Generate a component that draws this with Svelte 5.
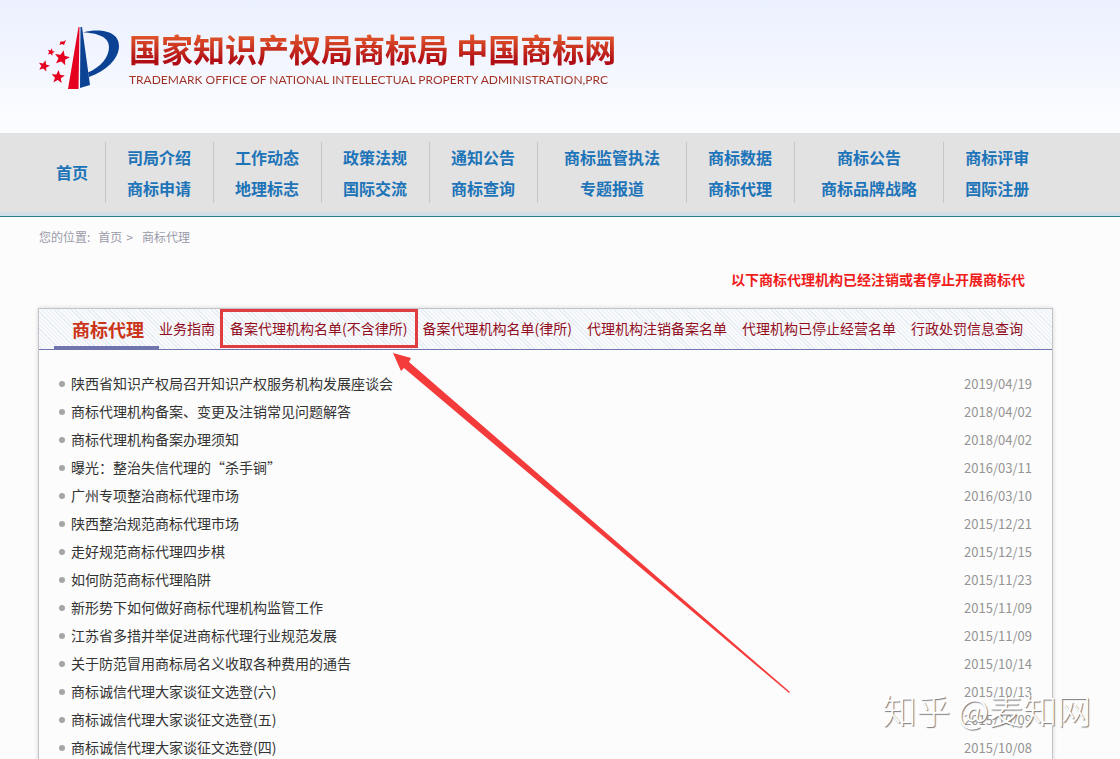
<script>
    const menu = [
        { links: ['司局介绍', '商标申请'] },
        { links: ['工作动态', '地理标志'] },
        { links: ['政策法规', '国际交流'] },
        { links: ['通知公告', '商标查询'] },
        { links: ['商标监管执法', '专题报道'], wide: true },
        { links: ['商标数据', '商标代理'] },
        { links: ['商标公告', '商标品牌战略'], wide: true },
        { links: ['商标评审', '国际注册'] }
    ];

    const tabs = [
        { name: '业务指南' },
        { name: '备案代理机构名单(不含律所)', marked: true },
        { name: '备案代理机构名单(律所)' },
        { name: '代理机构注销备案名单' },
        { name: '代理机构已停止经营名单' },
        { name: '行政处罚信息查询' }
    ];

    const articles = [
        { title: '陕西省知识产权局召开知识产权服务机构发展座谈会', date: '2019/04/19' },
        { title: '商标代理机构备案、变更及注销常见问题解答', date: '2018/04/02' },
        { title: '商标代理机构备案办理须知', date: '2018/04/02' },
        { title: '曝光：整治失信代理的“杀手锏”', date: '2016/03/11' },
        { title: '广州专项整治商标代理市场', date: '2016/03/10' },
        { title: '陕西整治规范商标代理市场', date: '2015/12/21' },
        { title: '走好规范商标代理四步棋', date: '2015/12/15' },
        { title: '如何防范商标代理陷阱', date: '2015/11/23' },
        { title: '新形势下如何做好商标代理机构监管工作', date: '2015/11/09' },
        { title: '江苏省多措并举促进商标代理行业规范发展', date: '2015/11/09' },
        { title: '关于防范冒用商标局名义收取各种费用的通告', date: '2015/10/14' },
        { title: '商标诚信代理大家谈征文选登(六)', date: '2015/10/13' },
        { title: '商标诚信代理大家谈征文选登(五)', date: '2015/10/09' },
        { title: '商标诚信代理大家谈征文选登(四)', date: '2015/10/08' }
    ];

    // x, y, radius, rotation
    const stars = [
        [24, 32, 8, 12],
        [20, 51, 7, 5],
        [6, 40, 6, 15],
        [13, 26, 4, 15]
    ];
</script>

<div class="page">
    <header class="banner">
        <svg class="logo" viewBox="0 0 82 64" aria-hidden="true">
            <path fill="#e50020" d="M40.5 1 L41.5 1 L40.5 63 L30 63 Z" />
            <path fill="#0b4294" d="M42.5 1 L44 1 L52 59 L42 62 Z" />
            <path fill="#0b4294" d="M45 6.5 C62 2 81 5 81 20 C81 33 68 45 51 51 L50 46.5 C63 41 71 31 71 21 C71 11 60 7 45 6.5 Z" />
            {#each stars as [x, y, r, turn]}
                <polygon
                    fill="#e50020"
                    points="0,-1 .26,-.35 .95,-.31 .42,.13 .59,.81 0,.44 -.59,.81 -.42,.13 -.95,-.31 -.26,-.35"
                    transform="translate({x} {y}) rotate({turn}) scale({r})"
                />
            {/each}
            <path fill="#e50020" d="M28 14 L27 16.5 L26 19 L24 18 L21.5 19 L22.5 15.5 L25.5 15.5 Z" />
        </svg>
        <div class="names">
            <h1>国家知识产权局商标局 中国商标网</h1>
            <p>TRADEMARK OFFICE OF NATIONAL INTELLECTUAL PROPERTY ADMINISTRATION,PRC</p>
        </div>
    </header>

    <nav class="menu">
        <div class="group home"><a href="#home">首页</a></div>
        {#each menu as group}
            <div class="group" class:wide={group.wide}>
                {#each group.links as link}
                    <a href="#menu">{link}</a>
                {/each}
            </div>
        {/each}
    </nav>

    <main>
        <div class="crumbs">
            <span>您的位置:</span>
            <a href="#home">首页</a>
            <span class="sep">&gt;</span>
            <a href="#agency">商标代理</a>
        </div>

        <div class="notice">以下商标代理机构已经注销或者停止开展商标代</div>

        <section class="panel">
            <div class="tabs">
                <h2>商标代理</h2>
                {#each tabs as tab}
                    <a href="#tab" class:marked={tab.marked}>{tab.name}</a>
                {/each}
            </div>
            <ul>
                {#each articles as article}
                    <li>
                        <a href="#article">{article.title}</a>
                        <time>{article.date}</time>
                    </li>
                {/each}
            </ul>
        </section>
    </main>

    <svg class="arrow" viewBox="0 0 398 341" aria-hidden="true">
        <path fill="#f43b3b" d="M0 0 L18 5 L16 9 L397 339 L396 340 L11 15 L8 18 Z" />
    </svg>
    <div class="watermark">知乎 @麦知网</div>
</div>

<style>
    :global(body) {
        margin: 0;
        background: #fcfcfc;
    }

    .page {
        position: relative;
        height: 100vh;
        overflow: hidden;
        font-family: "Noto Sans CJK SC", sans-serif;
        font-size: 14px;
    }

    a {
        color: inherit;
        text-decoration: none;
    }

    .banner {
        display: flex;
        align-items: flex-start;
        gap: 9px;
        box-sizing: border-box;
        height: 133px;
        padding: 26px 38px 0;
        background: linear-gradient(#ebf0fe, #fcfdff);
    }

    .logo {
        flex: none;
        width: 82px;
        height: 64px;
    }

    .names {
        white-space: nowrap;
    }

    h1,
    .names p {
        margin: 0;
        color: transparent;
        background: linear-gradient(#e2582c 20%, #b00d14 80%);
        -webkit-background-clip: text;
        background-clip: text;
    }

    h1 {
        font-size: 32px;
        line-height: 44px;
        font-weight: 700;
    }

    .names p {
        font-family: Lato, sans-serif;
        font-size: 12px;
        line-height: 20px;
        background-image: linear-gradient(#c4402c, #7c2018);
    }

    .menu {
        display: flex;
        box-sizing: border-box;
        height: 84px;
        padding: 9px 38px 13px;
        background: linear-gradient(#e2e2e2 95%, #d3dfe8 95%);
        border-bottom: 1px solid #2b7c8d;
        color: #1d74b8;
        font-size: 16px;
        font-weight: 700;
        line-height: 31px;
        white-space: nowrap;
    }

    .group {
        display: flex;
        flex-direction: column;
        align-items: center;
        justify-content: center;
        padding: 0 22px 0 21px;
        border-right: 1px solid #c6c6ca;
    }

    .group.wide {
        padding: 0 26px;
    }

    .group.home {
        padding: 0 17px 0 18px;
    }

    .group:last-child {
        border-right: 0;
    }

    main {
        margin: 0 67px 0 38px;
    }

    .crumbs {
        display: flex;
        gap: 8px;
        padding: 10px 0 0 1px;
        color: #9a9aa8;
        font-size: 12px;
        line-height: 20px;
    }

    .crumbs .sep {
        margin: 0 1px 0 -4px;
    }

    .notice {
        padding: 22px 28px 19px 0;
        color: #f01c1c;
        font-weight: 700;
        line-height: 20px;
        text-align: right;
    }

    .panel {
        border: 1px solid #c4c4c8;
        box-shadow: 0 0 4px #d4d4d4;
    }

    .tabs {
        display: flex;
        gap: 15px;
        height: 40px;
        padding-left: 15px;
        background: repeating-linear-gradient(45deg, #f8fafc 0 2px, #e8edf5 2px 3px);
        border-bottom: 1px solid #7175ad;
        color: #930d1c;
        line-height: 38px;
        white-space: nowrap;
    }

    h2 {
        box-sizing: border-box;
        margin: 0 -15px 0 0;
        padding: 0 15px 0 18px;
        border-bottom: 3px solid #7175ad;
        color: #cb3418;
        font-size: 18px;
        line-height: 40px;
    }

    .marked {
        position: relative;
    }

    .marked::after {
        content: "";
        position: absolute;
        inset: 0 -11px 1px -10px;
        border: 3px solid #e03d42;
    }

    ul {
        margin: 0;
        padding: 20px 20px 0;
        list-style: none;
    }

    li {
        display: flex;
        align-items: center;
        height: 28px;
        color: #333;
    }

    li::before {
        content: "";
        width: 6px;
        height: 6px;
        margin-right: 6px;
        border-radius: 50%;
        background: #a6a6a6;
    }

    li a,
    time {
        padding-bottom: 2px;
    }

    time {
        margin-left: auto;
        color: #949494;
        font-size: 13px;
    }

    .arrow {
        position: absolute;
        left: 393px;
        top: 353px;
        width: 398px;
        height: 341px;
    }

    .watermark {
        position: absolute;
        right: 29px;
        bottom: 23px;
        color: #fff;
        font-size: 34px;
        font-weight: 300;
        line-height: 52px;
        text-shadow: 1px 1px 1px #777;
    }
</style>
